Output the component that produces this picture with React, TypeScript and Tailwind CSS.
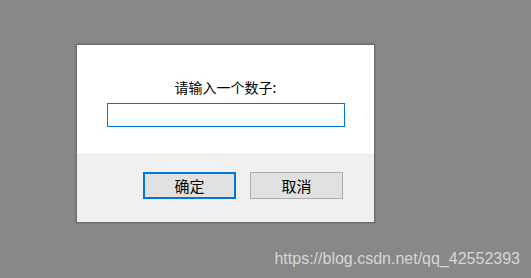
export default function App() {
  return (
    <div className="relative w-[531px] h-[278px] bg-[#888888] pt-[44px] pl-[76px] overflow-hidden" style={{ fontFamily: '"Microsoft YaHei", "Noto Sans CJK SC", sans-serif' }}>
      <div className="w-[299px] h-[179px] border border-[#6e6e6e] flex flex-col bg-white shadow-[0_0_2px_rgba(0,0,0,0.3)]">
        <div className="h-[110px] flex flex-col items-center border-b border-[#e6e6e6]">
          <div className="mt-[32px] h-[20px] leading-[20px] text-[14px] text-black">请输入一个数子:</div>
          <div className="mt-[6px] ml-[1px] w-[238px] h-[24px] border border-[#0078d7] bg-white" />
        </div>
        <div className="flex-1 bg-[#f0f0f0] flex justify-end gap-[14px] pt-[17px] pr-[31px]">
          <button className="w-[93px] h-[27px] border-2 border-[#0078d7] bg-[#e1e1e1] text-[15px] text-black leading-none">确定</button>
          <button className="w-[93px] h-[27px] border border-[#adadad] bg-[#e1e1e1] text-[15px] text-black leading-none">取消</button>
        </div>
      </div>
      <div className="absolute right-[11px] bottom-[10px] text-[16px] leading-[18px] text-[#d6d6d6]" style={{ fontFamily: '"Liberation Sans", Arial, sans-serif' }}>https://blog.csdn.net/qq_42552393</div>
    </div>
  );
}
